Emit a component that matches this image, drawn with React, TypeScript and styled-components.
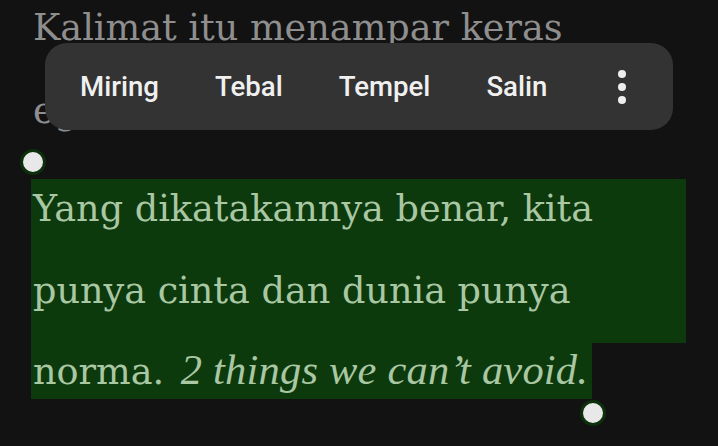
import styled, { createGlobalStyle } from "styled-components";

const GlobalStyle = createGlobalStyle`
  html, body {
    margin: 0;
    padding: 0;
    background: #121212;
    overflow: hidden;
  }
`;

const Page = styled.div`
  position: relative;
  width: 718px;
  height: 446px;
  overflow: hidden;
  background: #121212;
  font-family: "DejaVu Serif", "Liberation Serif", serif;
  font-size: 36.6px;
`;

const Content = styled.div`
  display: flex;
  flex-direction: column;
  padding-left: 31px;
  margin-top: -14px;
`;

const Paragraph = styled.p`
  margin: 0;
  padding-left: 2px;
  line-height: 83px;
  color: #8e8e8e;
`;

const Selection = styled.div`
  display: flex;
  flex-direction: column;
  align-items: flex-start;
  margin-top: 27px;
  width: 655px;
`;

interface ILineProps {
  $last?: boolean;
}

const SelectedLine = styled.div<ILineProps>`
  box-sizing: border-box;
  background: #0d3a0d;
  color: #a9c7a3;
  padding-left: 2px;
  padding-right: ${(props) => (props.$last ? "4px" : "0")};
  width: ${(props) => (props.$last ? "auto" : "100%")};
  line-height: ${(props) => (props.$last ? "54px" : "60px")};
  padding-bottom: ${(props) => (props.$last ? "0" : "22px")};
  white-space: nowrap;
`;

const Italic = styled.em`
  font-family: "Liberation Serif", serif;
  font-style: italic;
  font-size: 42.5px;
  letter-spacing: 0.2px;
  margin-left: 5px;
`;

const Toolbar = styled.div`
  position: absolute;
  left: 45px;
  top: 43px;
  width: 628px;
  height: 87px;
  box-sizing: border-box;
  border-radius: 22px;
  background: #333333;
  display: flex;
  align-items: center;
  padding: 0 47px 0 35px;
  font-family: Roboto, "Noto Sans", sans-serif;
  font-weight: 500;
  font-size: 27.6px;
  color: #f0f0f0;
`;

const Item = styled.span`
  margin-right: 56px;
`;

const Kebab = styled.div`
  margin-left: auto;
  display: flex;
  flex-direction: column;
  gap: 5px;
`;

const Dot = styled.span`
  width: 8px;
  height: 8px;
  border-radius: 50%;
  background: #eeeeee;
`;

interface IHandleProps {
  $x: number;
  $y: number;
}

const Handle = styled.div<IHandleProps>`
  position: absolute;
  left: ${(props) => props.$x - 13}px;
  top: ${(props) => props.$y - 13}px;
  width: 20px;
  height: 20px;
  border-radius: 50%;
  background: #e8e8e8;
  border: 3px solid #0b300b;
`;

function App() {
  return (
    <>
      <GlobalStyle />
      <Page>
        <Content>
          <Paragraph>
            Kalimat itu menampar keras
            <br />
            egoisku.
          </Paragraph>
          <Selection>
            <SelectedLine>Yang dikatakannya benar, kita</SelectedLine>
            <SelectedLine>punya cinta dan dunia punya</SelectedLine>
            <SelectedLine $last>
              norma. <Italic>2 things we can’t avoid.</Italic>
            </SelectedLine>
          </Selection>
        </Content>
        <Toolbar>
          <Item>Miring</Item>
          <Item>Tebal</Item>
          <Item>Tempel</Item>
          <Item>Salin</Item>
          <Kebab>
            <Dot />
            <Dot />
            <Dot />
          </Kebab>
        </Toolbar>
        <Handle $x={33} $y={162} />
        <Handle $x={593} $y={413} />
      </Page>
    </>
  );
}

export default App;
